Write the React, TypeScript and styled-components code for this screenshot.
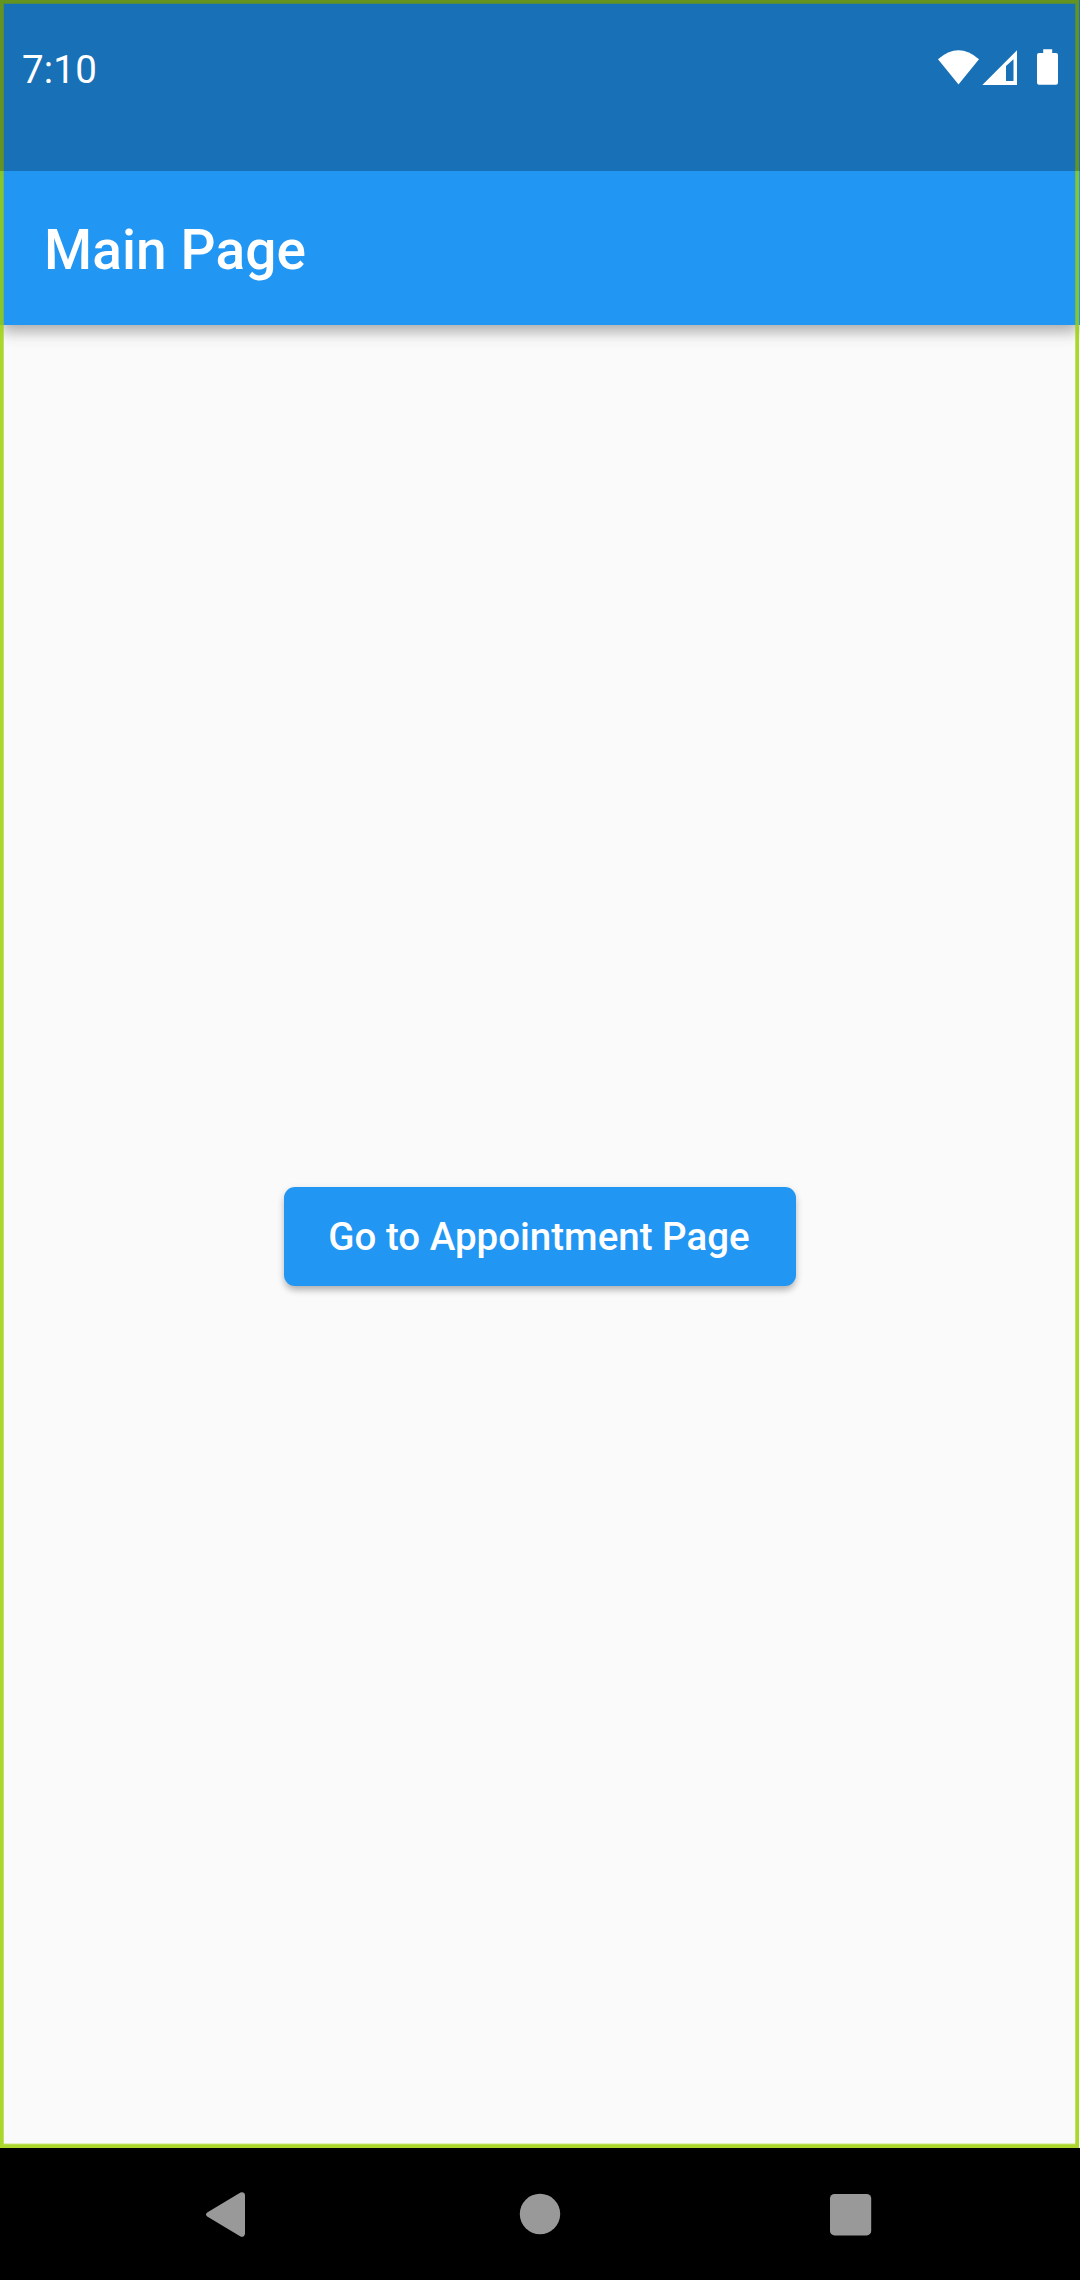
import React from "react";
import styled, { createGlobalStyle } from "styled-components";

const GlobalStyle = createGlobalStyle`
  *, *::before, *::after { box-sizing: border-box; }
  body { margin: 0; background: #000; font-family: Roboto, "Noto Sans", sans-serif; }
`;

const Screen = styled.div`
  display: flex;
  flex-direction: column;
  width: 1080px;
  height: 2280px;
`;

const AppWindow = styled.div`
  position: relative;
  display: flex;
  flex-direction: column;
  flex: 1;
  background: #fafafa;
`;

const FocusOutline = styled.div`
  position: absolute;
  inset: 0 1px 0 0;
  border: 3px solid rgba(155, 207, 3, 0.83);
  box-shadow: inset 0 0 0 1px rgba(155, 207, 3, 0.6), inset 0 -2px 0 0 rgba(155, 207, 3, 0.25);
  pointer-events: none;
  z-index: 1;
`;

const StatusBar = styled.div`
  position: relative;
  z-index: 2;
  display: flex;
  justify-content: space-between;
  align-items: flex-start;
  height: 171px;
  padding: 46px 22px 0;
  background: rgba(0, 0, 0, 0.25);
  color: #fff;
`;

const Clock = styled.span`
  padding-top: 1px;
  font-size: 38.5px;
  line-height: 46px;
  letter-spacing: 0.2px;
`;

const StatusIcons = styled.svg`
  width: 120px;
  height: 40px;
  fill: currentColor;
`;

const Header = styled.header`
  background: #2196f3;
  box-shadow: 0 8px 15px -2px rgba(0, 0, 0, 0.28), 0 4px 14px rgba(0, 0, 0, 0.09);
`;

const Toolbar = styled.div`
  display: flex;
  align-items: center;
  height: 154px;
  padding: 4px 44px 0;
`;

const Title = styled.h1`
  margin: 0;
  color: #fff;
  font-size: 55px;
  font-weight: 500;
  line-height: 64px;
  letter-spacing: 0.1px;
`;

const Body = styled.main`
  display: flex;
  flex: 1;
  align-items: center;
  justify-content: center;
`;

const RaisedButton = styled.button`
  width: 512px;
  height: 99px;
  padding: 0 2px 0 0;
  border: 0;
  border-radius: 11px;
  background: #2196f3;
  color: #fff;
  font: 500 38.5px/45px Roboto, "Noto Sans", sans-serif;
  white-space: nowrap;
  box-shadow: 0 5px 7px -1px rgba(0, 0, 0, 0.25), 0 2px 8px rgba(0, 0, 0, 0.09);
`;

const NavigationBar = styled.nav`
  display: flex;
  align-items: center;
  justify-content: space-between;
  height: 132px;
  padding: 0 198px;
  background: #000;
`;

const NavIcon = styled.svg`
  width: 60px;
  height: 60px;
  fill: #999;
`;

export default function App() {
  return (
    <>
      <GlobalStyle />
      <Screen>
        <AppWindow>
          <Header>
            <StatusBar>
              <Clock>7:10</Clock>
              <StatusIcons viewBox="938 46 120 40">
                <path d="M938 59.2Q958.5 41.4 979 59.2L958.5 84.6Z" />
                <path fillRule="evenodd" d="M982.3 85L1017 50.3V85ZM1006 81H1013.5V59.2L1006 66Z" />
                <path d="M1043.2 49.2H1052.2V53H1056Q1058 53 1058 55V82.6Q1058 84.8 1056 84.8H1039Q1037 84.8 1037 82.6V55Q1037 53 1039 53H1043.2Z" />
              </StatusIcons>
            </StatusBar>
            <Toolbar>
              <Title>Main Page</Title>
            </Toolbar>
          </Header>
          <Body>
            <RaisedButton type="button">Go to Appointment Page</RaisedButton>
          </Body>
          <FocusOutline />
        </AppWindow>
        <NavigationBar>
          <NavIcon viewBox="198 2184 60 60" aria-label="Back">
            <path d="M207.2 2212.4L240.5 2192.6Q242.4 2191.8 243.8 2192.8Q245 2193.6 245 2195.4V2233.6Q245 2235.4 243.8 2236.2Q242.4 2237.2 240.5 2236.4L207.2 2216.6Q206 2215.6 206 2214.5Q206 2213.4 207.2 2212.4Z" />
          </NavIcon>
          <NavIcon viewBox="510 2184 60 60" aria-label="Home">
            <circle cx="540" cy="2214" r="20.2" />
          </NavIcon>
          <NavIcon viewBox="822 2184 60 60" aria-label="Recents">
            <rect x="830" y="2194" width="41.2" height="41.4" rx="4.5" />
          </NavIcon>
        </NavigationBar>
      </Screen>
    </>
  );
}
